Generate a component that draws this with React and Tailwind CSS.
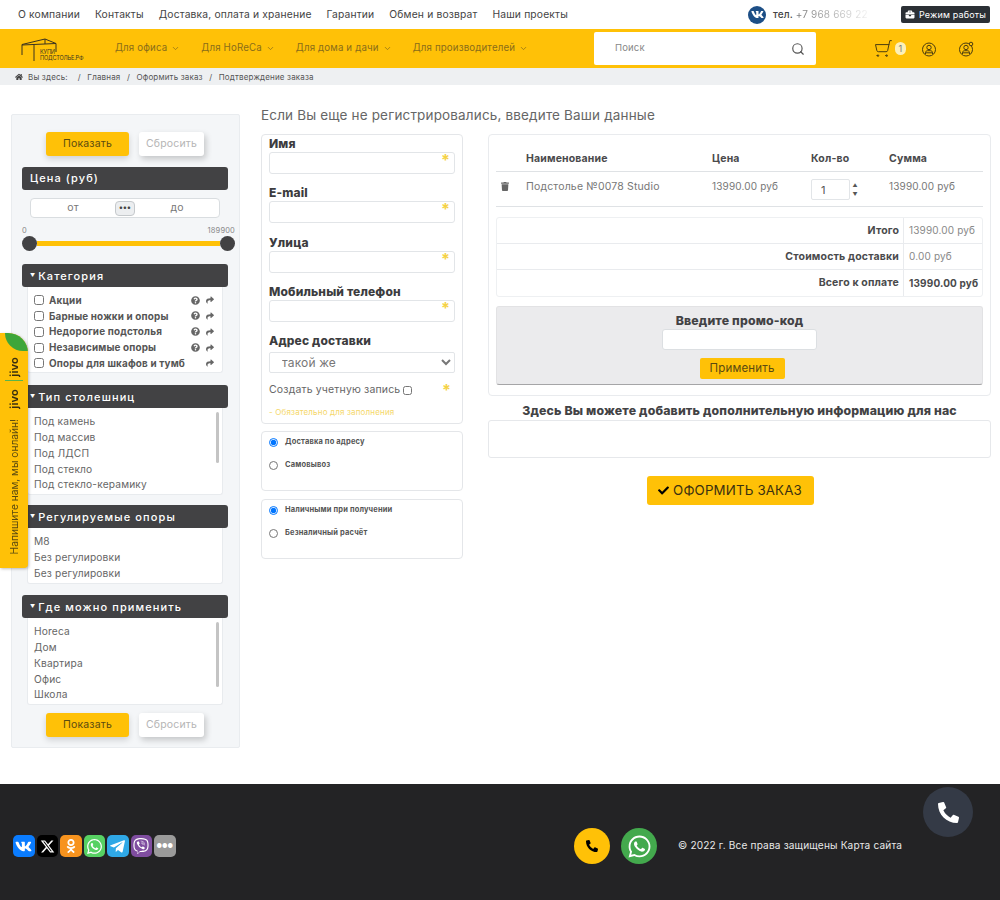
import React from "react";
import { ChevronDown, Search, ShoppingCart } from "lucide-react";
import {
  FaVk,
  FaWhatsapp,
  FaTelegramPlane,
  FaViber,
  FaOdnoklassniki,
  FaPhoneAlt,
  FaTrash,
  FaCheck,
  FaHome,
  FaQuestionCircle,
  FaShare,
  FaBriefcase,
} from "react-icons/fa";
import { FaXTwitter } from "react-icons/fa6";

const topLinks = ["О компании", "Контакты", "Доставка, оплата и хранение", "Гарантии", "Обмен и возврат", "Наши проекты"];
const menu = ["Для офиса", "Для HoReCa", "Для дома и дачи", "Для производителей"];
const crumbs = ["Главная", "Оформить заказ", "Подтверждение заказа"];
const categories = [
  { name: "Акции", help: true },
  { name: "Барные ножки и опоры", help: true },
  { name: "Недорогие подстолья", help: true },
  { name: "Независимые опоры", help: true },
  { name: "Опоры для шкафов и тумб", help: false },
];

function Logo() {
  return (
    <div className="flex items-end w-[64px] h-[26px] ml-[21px]">
      <svg width="36" height="24" viewBox="0 0 36 24" fill="none" stroke="#3a3320" strokeWidth="1" className="shrink-0">
        <path d="M1 17V6.500L24 1l11 4.500L1 7M35 5.500V14M13 7v16M24 1v5" />
      </svg>
      <div className="-ml-[17px] mb-[1px] text-[5.500px] leading-[6px] text-[#3a3320] tracking-tight whitespace-nowrap">
        <div>КУПИ</div>
        <div>ПОДСТОЛЬЕ.РФ</div>
      </div>
    </div>
  );
}

function UserBadge({ gear }) {
  return (
    <svg width="16" height="16" viewBox="0 0 16 16" fill="none" stroke="#4a3c10" strokeWidth="1">
      <circle cx="8" cy="8.500" r="6.500" />
      <circle cx="8" cy="6.500" r="2.200" />
      <path d="M4.500 13v-1.500c0-1 1-1.800 2-1.800h3c1 0 2 .8 2 1.800V13M4.500 11.800h7" />
      {gear && <circle cx="13" cy="3" r="1.800" fill="#ffc107" />}
    </svg>
  );
}

function PillButtons({ className }) {
  return (
    <div className={`flex justify-center gap-[10px] ${className}`}>
      <button className="w-[83px] h-[24px] rounded-[3px] bg-[#ffc107] text-[10.500px] text-[#5a4a10] shadow-[0_3px_6px_rgba(0,0,0,0.15)]">
        Показать
      </button>
      <button className="w-[65px] h-[24px] rounded-[3px] bg-white text-[10.500px] text-[#b5b5b5] shadow-[2px_3px_6px_rgba(0,0,0,0.2)]">
        Сбросить
      </button>
    </div>
  );
}

function FilterHead({ children, arrow = true, className = "" }) {
  return (
    <div className={`h-[23px] rounded-[3px] bg-[#424244] text-white text-[11px] font-medium tracking-[0.1em] flex items-center pl-[8px] ${className}`}>
      {arrow && <span className="text-[5px] mr-[3px] tracking-normal">▼</span>}
      {children}
    </div>
  );
}

function ListBox({ items, scroll, height }) {
  return (
    <div className="mx-[5px] bg-white rounded-b-[3px] border-b border-x border-[#e8ebee] flex pl-[6px] pr-[3px] pt-[4px]" style={{ height }}>
      <div className="flex-1 pt-[2px] text-[10.200px] leading-[15.800px] text-[#666]">
        {items.map((t, i) => (
          <div key={i}>{t}</div>
        ))}
      </div>
      {scroll && <div className="w-[3px] rounded bg-[#c4c4c4]" style={{ height: scroll }}></div>}
    </div>
  );
}

function Sidebar() {
  return (
    <aside className="w-[229px] h-[634px] shrink-0 bg-[#f4f6f8] border border-[#e9ecef] rounded-[2px] pl-[10px] pr-[11px] pt-[17px]">
      <PillButtons />
      <FilterHead arrow={false} className="mt-[11px]">Цена (руб)</FilterHead>
      <div className="mt-[8px] mx-[8px] h-[20px] rounded-[4px] bg-white border border-[#d9dde0] flex items-center text-[10.500px] text-[#777]">
        <span className="flex-1 text-center">от</span>
        <span className="w-[20px] h-[15px] rounded-[4px] bg-[#eceef0] border border-[#c5c9cc] text-[8px] font-bold leading-[11px] text-center text-[#444]">•••</span>
        <span className="flex-1 text-center">до</span>
      </div>
      <div className="mt-[7px] -mr-[7px] flex justify-between text-[7.500px] text-[#888]">
        <span>0</span>
        <span>189900</span>
      </div>
      <div className="-mr-[7px] flex items-center">
        <span className="w-[15px] h-[15px] rounded-full bg-[#424244] shrink-0"></span>
        <span className="flex-1 h-[5px] bg-[#ffc107]"></span>
        <span className="w-[15px] h-[15px] rounded-full bg-[#424244] shrink-0"></span>
      </div>
      <FilterHead className="mt-[13px]">Категория</FilterHead>
      <div className="mx-[5px] h-[86px] bg-white rounded-b-[3px] border-b border-x border-[#e8ebee] pl-[6px] pr-[5px] pt-[5px]">
        {categories.map((c) => (
          <div key={c.name} className="h-[15.800px] flex items-center text-[9.900px] font-bold text-[#555]">
            <input type="checkbox" readOnly className="w-[10px] h-[10px] mr-[5px]" />
            <span className="flex-1 whitespace-nowrap">{c.name}</span>
            {c.help && <FaQuestionCircle className="w-[9px] h-[9px] text-[#666] mr-[6px]" />}
            <FaShare className="w-[8px] h-[8px] text-[#666] mr-[3px]" />
          </div>
        ))}
      </div>
      <FilterHead className="mt-[12px]">Тип столешниц</FilterHead>
      <ListBox height={87} scroll={51} items={["Под камень", "Под массив", "Под ЛДСП", "Под стекло", "Под стекло-керамику"]} />
      <FilterHead className="mt-[10px]">Регулируемые опоры</FilterHead>
      <ListBox height={56} items={["М8", "Без регулировки", "Без регулировки"]} />
      <FilterHead className="mt-[11px]">Где можно применить</FilterHead>
      <ListBox height={87} scroll={65} items={["Horeca", "Дом", "Квартира", "Офис", "Школа"]} />
      <PillButtons className="mt-[8px]" />
    </aside>
  );
}

function Field({ label }) {
  return (
    <div className="h-[49.300px]">
      <div className="text-[12px] leading-[16px] font-extrabold text-[#3c3c3e]">{label}</div>
      <div className="h-[22px] bg-white border border-[#e2e5e8] rounded-[3px] flex justify-end pr-[4px] text-[16px] leading-[14px] font-bold text-[#f5d245]">*</div>
    </div>
  );
}

function RadioBox({ options, className = "" }) {
  return (
    <div className={`h-[60px] border border-[#e4e6e9] rounded-[4px] pl-[7px] ${className}`}>
      <div className="-mt-[1.500px]">
        {options.map((o, i) => (
          <label key={o} className="h-[23px] flex items-center text-[7.500px] font-bold text-[#555]">
            <input type="radio" readOnly checked={i === 0} className="w-[9px] h-[9px] m-0 mr-[7px]" />
            {o}
          </label>
        ))}
      </div>
    </div>
  );
}

function CustomerForm() {
  return (
    <div className="w-[202px] shrink-0">
      <div className="h-[290px] border border-[#e4e6e9] rounded-[4px] px-[7px] pt-[1px]">
        <Field label="Имя" />
        <Field label="E-mail" />
        <Field label="Улица" />
        <Field label="Мобильный телефон" />
        <div className="text-[12px] leading-[16px] font-extrabold text-[#3c3c3e]">Адрес доставки</div>
        <select className="w-full h-[21px] -mt-[1px] bg-white border border-[#e2e5e8] rounded-[2px] text-[12px] text-[#777] pl-[8px]">
          <option>такой же</option>
        </select>
        <div className="mt-[9px] flex items-center text-[10.500px] text-[#666]">
          Создать учетную запись
          <input type="checkbox" readOnly className="w-[9px] h-[9px] ml-[3px]" />
          <span className="ml-auto mr-[4px] text-[16px] leading-[14px] font-bold text-[#f5d245]">*</span>
        </div>
        <div className="mt-[8px] text-[8px] text-[#f5d76a]">- Обязательно для заполнения</div>
      </div>
      <RadioBox className="mt-[7px]" options={["Доставка по адресу", "Самовывоз"]} />
      <RadioBox className="mt-[8px]" options={["Наличными при получении", "Безналичный расчёт"]} />
    </div>
  );
}

function Totals({ label, value, strong, last }) {
  return (
    <div className={`h-[26px] grid grid-cols-[407px_78px] items-stretch text-[10.500px] ${last ? "" : "border-b border-[#e9ebee]"}`}>
      <div className="flex items-center justify-end pr-[4px] font-bold text-[#4a4a4c] border-r border-[#e9ebee]">{label}</div>
      <div className={`flex items-center pl-[5px] text-[10px] ${strong ? "font-bold text-[#4a4a4c]" : "text-[#888]"}`}>{value}</div>
    </div>
  );
}

function Cart() {
  return (
    <div className="flex-1 ml-[25px]">
      <div className="h-[262px] border border-[#e9ebee] rounded-[4px] px-[7px]">
        <div className="h-[37px] grid grid-cols-[30px_186px_99px_78px_94px] items-center text-[10.500px] font-bold text-[#4a4a4c] border-b border-[#dfe2e5] pt-[11px]">
          <span></span>
          <span>Наименование</span>
          <span>Цена</span>
          <span>Кол-во</span>
          <span>Сумма</span>
        </div>
        <div className="h-[35px] grid grid-cols-[30px_186px_99px_78px_94px] items-start text-[10.500px] text-[#777] border-b border-[#dfe2e5] pt-[7px]">
          <FaTrash className="w-[8px] h-[9px] text-[#666] ml-[5px] mt-[3px]" />
          <span>Подстолье №0078 Studio</span>
          <span className="text-[10px]">13990.00 руб</span>
          <div className="flex items-center">
            <div className="w-[39px] h-[21px] bg-white border border-[#e2e5e8] rounded-[2px] pl-[9px] leading-[20px] text-[11px] text-[#555]">1</div>
            <div className="ml-[1px] w-[8px] text-[5px] leading-[9px] text-center text-[#555]">
              <div>▲</div>
              <div>▼</div>
            </div>
          </div>
          <span className="text-[10px]">13990.00 руб</span>
        </div>
        <div className="mt-[10px] border border-[#eef0f2] rounded-[3px]">
          <Totals label="Итого" value="13990.00 руб" />
          <Totals label="Стоимость доставки" value="0.00 руб" />
          <Totals label="Всего к оплате" value="13990.00 руб" strong last />
        </div>
        <div className="mt-[9px] h-[79px] bg-[#ebebed] rounded-[3px] border border-[#e2e2e4] border-b-[#a5a5a7] flex flex-col items-center pt-[6px]">
          <div className="text-[12.300px] leading-[15px] font-extrabold text-[#424244]">Введите промо-код</div>
          <div className="mt-[1px] w-[155px] h-[21px] bg-white border border-[#dcdfe2] rounded-[3px]"></div>
          <button className="mt-[8px] ml-[5px] w-[85px] h-[21px] bg-[#ffc107] rounded-[2px] text-[11.500px] text-[#5a4a10]">Применить</button>
        </div>
      </div>
      <div className="mt-[7px] text-center text-[12.300px] leading-[16px] font-extrabold text-[#424244]">
        Здесь Вы можете добавить дополнительную информацию для нас
      </div>
      <div className="mt-[1px] h-[38px] border border-[#e6e8eb] rounded-[3px]"></div>
      <div className="mt-[18px] flex justify-center pr-[19px]">
        <button className="w-[167px] h-[29px] bg-[#ffc107] rounded-[3px] text-[13.300px] text-[#3a3010] flex items-center justify-center">
          <FaCheck className="w-[11px] h-[11px] text-black mr-[4px]" />
          ОФОРМИТЬ ЗАКАЗ
        </button>
      </div>
    </div>
  );
}

function Social({ bg, children }) {
  return <span className={`w-[21.500px] h-[21.500px] rounded-[5px] flex items-center justify-center text-white ${bg}`}>{children}</span>;
}

function Footer() {
  return (
    <footer className="h-[116px] bg-[#232325] flex items-center pl-[13px] pt-[8px]">
      <div className="flex gap-[2px] w-[561px]">
        <Social bg="bg-[#0a7cff]"><FaVk className="w-[17px] h-[17px]" /></Social>
        <Social bg="bg-black"><FaXTwitter className="w-[15px] h-[15px]" /></Social>
        <Social bg="bg-[#f7931e]"><FaOdnoklassniki className="w-[14px] h-[14px]" /></Social>
        <Social bg="bg-[#57d163]"><FaWhatsapp className="w-[17px] h-[17px]" /></Social>
        <Social bg="bg-[#2fa8e6]"><FaTelegramPlane className="w-[17px] h-[17px]" /></Social>
        <Social bg="bg-[#7f4da0]"><FaViber className="w-[16px] h-[16px]" /></Social>
        <Social bg="bg-[#9a9a9a]"><span className="text-[6px] leading-[8px] font-bold tracking-normal">●●●</span></Social>
      </div>
      <span className="w-[36px] h-[36px] rounded-full bg-[#ffc107] flex items-center justify-center">
        <FaPhoneAlt className="w-[12px] h-[12px] text-black" />
      </span>
      <span className="ml-[11px] w-[36px] h-[36px] rounded-full bg-[#43a94d] flex items-center justify-center">
        <FaWhatsapp className="w-[25px] h-[25px] text-white" />
      </span>
      <span className="ml-[21px] text-[10.100px] text-[#e8e8e8]">© 2022 г. Все права защищены Карта сайта</span>
    </footer>
  );
}

function JivoTab() {
  return (
    <div className="absolute left-0 top-[333px] w-[28px] h-[235px] bg-[#ffc107] rounded-r-[4px] rounded-tr-[20px] shadow-[1px_1px_3px_rgba(0,0,0,0.25)] overflow-hidden flex flex-col items-center">
      <span className="absolute right-0 top-0 w-[23px] h-[18px] rounded-bl-[22px] bg-[#3da63a]"></span>
      <span className="mt-[24px] font-bold text-[11px] text-[#3a3010] [writing-mode:vertical-rl] rotate-180">jivo</span>
      <span className="mt-[3px] w-[18px] h-[1.500px] bg-[#5ab54b]"></span>
      <span className="mt-[8px] font-bold text-[11px] leading-[12px] text-[#3a3010] [writing-mode:vertical-rl] rotate-180">jivo</span>
      <span className="mt-[10px] text-[10.200px] leading-[12px] tracking-normal text-[#5a4a10] whitespace-nowrap [writing-mode:vertical-rl] rotate-180">Напишите нам, мы онлайн!</span>
    </div>
  );
}

export default function App() {
  return (
    <div className="relative h-[900px] w-[1000px] overflow-hidden bg-white font-['Inter','Noto_Sans',sans-serif] tracking-[0.01em]">
      <div className="h-[29px] flex items-center pl-[18px] text-[10.300px] text-[#444]">
        <nav className="flex gap-[15px] w-[730px]">
          {topLinks.map((l) => (
            <span key={l}>{l}</span>
          ))}
        </nav>
        <span className="w-[18px] h-[18px] rounded-full bg-[#1d4f86] flex items-center justify-center">
          <FaVk className="w-[13px] h-[13px] text-white" />
        </span>
        <span className="ml-[7px] w-[122px] text-[10px] font-medium text-[#444] whitespace-nowrap">
          тел.{" "}
          <span className="font-normal text-transparent bg-clip-text bg-gradient-to-r from-[#777] to-[#f2f2f2]">+7 968 669 22</span>
        </span>
        <span className="ml-[6px] w-[89px] h-[17px] rounded-[2px] bg-[#2b3035] text-white text-[9px] flex items-center pl-[4px]">
          <FaBriefcase className="w-[10px] h-[9px] mr-[4px]" />
          Режим работы
        </span>
      </div>

      <header className="h-[39px] bg-[#ffc107] flex items-center">
        <Logo />
        <nav className="ml-[30px] w-[479px] flex gap-[21px] text-[9.700px] text-[#8a6d1a]">
          {menu.map((m) => (
            <span key={m} className="flex items-center whitespace-nowrap">
              {m}
              <ChevronDown className="w-[9px] h-[9px] ml-[4px]" />
            </span>
          ))}
        </nav>
        <div className="w-[222px] h-[33px] bg-white rounded-[2px] flex items-center pl-[21px] pr-[11px] text-[9.500px] text-[#888]">
          <span className="flex-1">Поиск</span>
          <Search className="w-[14px] h-[14px] text-[#555]" />
        </div>
        <div className="ml-[58px] flex items-center text-[#4a3c10]">
          <ShoppingCart className="w-[19px] h-[19px] -scale-x-100" strokeWidth={1.250} />
          <span className="ml-[2px] w-[11px] h-[13px] rounded-full bg-[#fdf0b8] text-[9px] leading-[13px] text-center text-[#777]">1</span>
          <span className="ml-[15px]"><UserBadge /></span>
          <span className="ml-[21px]"><UserBadge gear /></span>
        </div>
      </header>

      <div className="h-[17px] bg-[#eef0f2] flex items-center pl-[15px] text-[8px] text-[#555]">
        <FaHome className="w-[8px] h-[8px] text-[#444] mr-[5px]" />
        <span className="mr-[10px]">Вы здесь:</span>
        <span className="flex gap-[6.500px]">
          {crumbs.map((c) => (
            <React.Fragment key={c}>
              <span>/</span>
              <span>{c}</span>
            </React.Fragment>
          ))}
        </span>
      </div>

      <main className="h-[699px] flex pl-[11px] pr-[9px] pt-[29px]">
        <Sidebar />
        <div className="flex-1 ml-[21px]">
          <h2 className="text-[13.500px] leading-[20px] -mt-[9px] text-[#666]">Если Вы еще не регистрировались, введите Ваши данные</h2>
          <div className="mt-[9px] flex">
            <CustomerForm />
            <Cart />
          </div>
        </div>
      </main>

      <Footer />
      <JivoTab />
      <span className="absolute left-[923px] top-[787px] w-[50px] h-[50px] rounded-full bg-[#343a46] flex items-center justify-center">
        <FaPhoneAlt className="w-[21px] h-[21px] text-white" />
      </span>
    </div>
  );
}
